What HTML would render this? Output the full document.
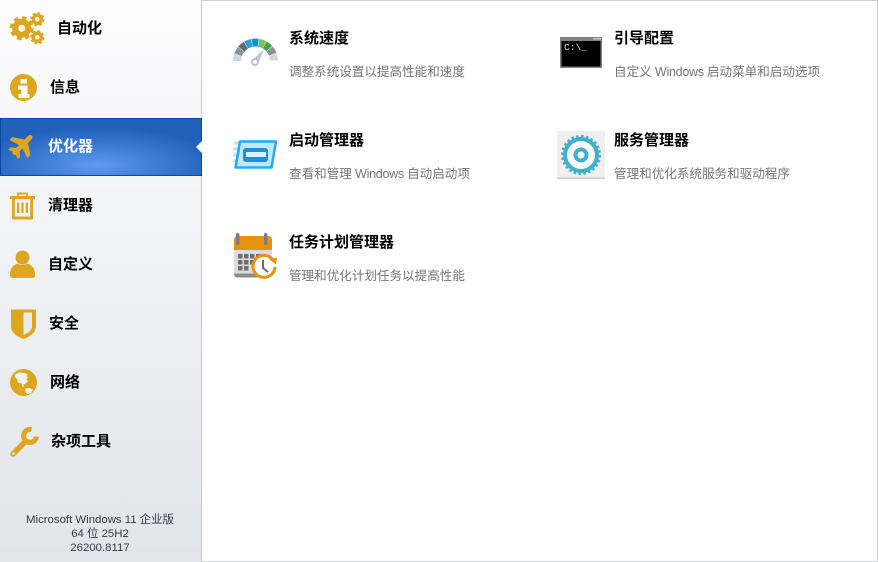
<!DOCTYPE html>
<html><head><meta charset="utf-8">
<style>
html,body{margin:0;padding:0;width:878px;height:562px;overflow:hidden;background:#fff;font-family:"Liberation Sans","Noto Sans CJK SC",sans-serif}
#side{position:absolute;left:0;top:0;width:201px;height:562px;background:linear-gradient(#fdfdfe,#e1e4e9)}
#main{position:absolute;left:201px;top:0;width:677px;height:562px;box-sizing:border-box;background:#fff;border:1px solid #cfd0d2;border-left:1px solid #c6c8cb}
#act{position:absolute;left:0;top:118px;width:202px;height:58px;box-sizing:border-box;border:1px solid #0e479b;background:radial-gradient(ellipse 125px 38px at 96px 46px,#5e9cee 0%,#3c7bd5 50%,#2160ba 100%)}
.n{position:absolute;font-size:15px;font-weight:bold;color:#000;line-height:20px;white-space:nowrap;font-family:"Noto Sans CJK SC",sans-serif}
.t{position:absolute;font-size:15px;font-weight:bold;color:#000;line-height:20px;white-space:nowrap;font-family:"Noto Sans CJK SC",sans-serif}
.d{position:absolute;font-size:12.57px;color:#757575;line-height:18px;white-space:nowrap;font-family:"Liberation Sans","Noto Sans CJK SC",sans-serif}
.d span{letter-spacing:-.3px}
svg{position:absolute;overflow:visible}
#ver{position:absolute;left:0;top:513px;width:200px;text-align:center;font-size:11.4px;line-height:14px;color:#333a48;font-family:"Liberation Sans","Noto Sans CJK SC",sans-serif}
</style></head><body>
<div id="side"></div>
<div id="main"></div>
<div id="act"></div>
<svg style="left:196px;top:141px" width="6" height="12"><path d="M6 0V12L0 6Z" fill="#fff"/></svg>

<svg style="left:10px;top:13px" width="36" height="34" viewBox="0 0 36 34">
<g fill="none" stroke="#dea61f">
<circle cx="11.7" cy="15.3" r="6.5" stroke-width="6"/>
<circle cx="11.7" cy="15.3" r="10.5" stroke-width="3" stroke-dasharray="4.5 3.75"/>
<circle cx="27.3" cy="6.3" r="4" stroke-width="3.5"/>
<circle cx="27.3" cy="6.3" r="6.2" stroke-width="2" stroke-dasharray="2.6 2.27"/>
<circle cx="27.3" cy="24.3" r="4" stroke-width="3.5"/>
<circle cx="27.3" cy="24.3" r="6.2" stroke-width="2" stroke-dasharray="2.6 2.27"/>
</g></svg>
<div class="n" style="left:57px;top:18px">自动化</div>

<svg style="left:10px;top:74px" width="28" height="28" viewBox="0 0 28 28"><circle cx="13.5" cy="13.5" r="13.5" fill="#dea61f"/><path d="M10.500 5h6.500v4.500h-6.500zM8 11.500h9.500v8.500H19.500v4H8.500v-4H11v-4.500H8z" fill="#fdfdfd"/></svg>
<div class="n" style="left:50px;top:77px">信息</div>

<svg style="left:10px;top:132px" width="26" height="26" viewBox="0 0 26 26">
<g transform="translate(12.500 13) scale(.8) rotate(45) translate(-13 -13)" fill="#dea61f">
<rect x="10" y="-3.500" width="6" height="33" rx="3"/>
<path d="M10.500 6L-3 15V20L10.500 16ZM15.500 6L29 15V20L15.500 16Z"/>
<path d="M10.500 21L4.500 25.500V29.500L10.500 27.500ZM15.500 21L21.500 25.500V29.500L15.500 27.500Z"/>
</g></svg>
<div class="n" style="left:48px;top:136px;color:#fff">优化器</div>

<svg style="left:10px;top:192px" width="26" height="28" viewBox="0 0 26 28"><g fill="#dea61f"><path d="M0 4h25v3H0z"/><path d="M7 5V0.500h11V5h-2V2.500H9V5z"/><path d="M2 7h2.800v17.500h15.400V7H23v19.500a1 1 0 0 1-1 1H3a1 1 0 0 1-1-1z"/><path d="M7 10.500h2.200V21H7zM11.400 10.500h2.200V21h-2.200zM15.800 10.500H18V21h-2.200z"/></g></svg>
<div class="n" style="left:48px;top:195px">清理器</div>

<svg style="left:10px;top:250px" width="26" height="29" viewBox="0 0 26 29"><g fill="#dea61f"><circle cx="12.500" cy="7.500" r="7"/><path d="M0 25C0 18 3 15 8 13.500C10 15.500 15 15.500 17 13.500C22 15 25 18 25 25C25 27 24 28 22 28H3C1 28 0 27 0 25Z"/></g></svg>
<div class="n" style="left:48px;top:254px">自定义</div>

<svg style="left:11px;top:309px" width="25" height="30" viewBox="0 0 25 30"><path d="M0 .5h25v17c0 6-6.500 10.500-12.500 12.500C6.500 28 0 23.500 0 17.500Z" fill="#dea61f"/><path d="M12.500 3.500h8.500v14c0 3.500-3.500 6.500-8.500 8.500Z" fill="#e9ebef"/></svg>
<div class="n" style="left:49px;top:313px">安全</div>

<svg style="left:10px;top:369px" width="28" height="28" viewBox="0 0 28 28"><circle cx="13.500" cy="13.500" r="13.500" fill="#dea61f"/><path d="M5 5.500L9 3.500L14 4L18 5.500L16 7L18 8L16.500 10.500L18 12.500L15 15L13.500 15.500L14 18L12.500 17.500L11.500 14.500L8 13.500L7 10L5 8.500ZM15 19.500L20 19L23 20.500L21 24L17 25L15.500 22.500Z" fill="#f2f2f0"/></svg>
<div class="n" style="left:50px;top:372px">网络</div>

<svg style="left:10px;top:427px" width="30" height="30" viewBox="0 0 30 30">
<path d="M3 27L16 14" stroke="#dea61f" stroke-width="5.500" stroke-linecap="round" fill="none"/>
<path d="M21.500 2.600A6.500 6.500 0 1 0 26.500 9.500" fill="none" stroke="#dea61f" stroke-width="5"/>
<circle cx="3.500" cy="26.500" r="1.300" fill="#e6e8ec"/></svg>
<div class="n" style="left:51px;top:431px">杂项工具</div>

<div id="ver">Microsoft Windows 11 企业版<br>64 位 25H2<br>26200.8117</div>

<!-- speed -->
<svg style="left:233px;top:38px" width="46" height="30" viewBox="0 0 46 30">
<g fill="none" stroke-width="8">
<circle cx="22.500" cy="23" r="18.500" pathLength="360" stroke-dasharray="17 343" transform="rotate(181.500 22.500 23)" stroke="#d0d6da"/>
<circle cx="22.500" cy="23" r="18.500" pathLength="360" stroke-dasharray="17 343" transform="rotate(201.500 22.500 23)" stroke="#87929a"/>
<circle cx="22.500" cy="23" r="18.500" pathLength="360" stroke-dasharray="17 343" transform="rotate(221.500 22.500 23)" stroke="#5f6b75"/>
<circle cx="22.500" cy="23" r="18.500" pathLength="360" stroke-dasharray="17 343" transform="rotate(241.500 22.500 23)" stroke="#2e9fd4"/>
<circle cx="22.500" cy="23" r="18.500" pathLength="360" stroke-dasharray="17 343" transform="rotate(261.500 22.500 23)" stroke="#1a8ed0"/>
<circle cx="22.500" cy="23" r="18.500" pathLength="360" stroke-dasharray="17 343" transform="rotate(281.500 22.500 23)" stroke="#7cbf5e"/>
<circle cx="22.500" cy="23" r="18.500" pathLength="360" stroke-dasharray="17 343" transform="rotate(301.500 22.500 23)" stroke="#4ba04f"/>
<circle cx="22.500" cy="23" r="18.500" pathLength="360" stroke-dasharray="17 343" transform="rotate(321.500 22.500 23)" stroke="#87929a"/>
<circle cx="22.500" cy="23" r="18.500" pathLength="360" stroke-dasharray="17 343" transform="rotate(341.500 22.500 23)" stroke="#d0d6da"/>
</g>
<path d="M31 11L25 26L19.500 22Z" fill="#bcc5ca"/>
<circle cx="22" cy="24" r="3" fill="#fff" stroke="#bcc5ca" stroke-width="2"/>
</svg>
<div class="t" style="left:289px;top:28px">系统速度</div>
<div class="d" style="left:289px;top:63px">调整系统设置以提高性能和速度</div>

<!-- console -->
<svg style="left:560px;top:37px" width="42" height="31" viewBox="0 0 42 31"><rect width="42" height="31" fill="#7e8285"/><rect x="1.500" y="4" width="39" height="25.500" fill="#000"/><rect x="33" y="1" width="8" height="1.500" fill="#c5c8ca"/><text x="4" y="13" font-family="Liberation Mono,monospace" font-size="9.6" fill="#e6e6e6">C:\_</text></svg>
<div class="t" style="left:614px;top:28px">引导配置</div>
<div class="d" style="left:614px;top:63px">自定义<span> Windows </span>启动菜单和启动选项</div>

<!-- startup -->
<svg style="left:233px;top:140px" width="45" height="30" viewBox="0 0 45 30">
<path d="M1 3h8M0 9h6M0 15h5M0 21h5" stroke="#b8e6fa" stroke-width="3" fill="none"/>
<path d="M7 1.500H43L38.500 27.500H2.500Z" fill="#bfe9fb" stroke="#2ba7ea" stroke-width="2.500" stroke-linejoin="round"/>
<rect x="10" y="8" width="25" height="14" rx="3" fill="#1e8fdc"/>
<rect x="13" y="12" width="20" height="5" fill="#dff3fc"/>
</svg>
<div class="t" style="left:289px;top:130px">启动管理器</div>
<div class="d" style="left:289px;top:165px">查看和管理<span> Windows </span>自动启动项</div>

<!-- service -->
<svg style="left:557px;top:131px" width="48" height="48" viewBox="0 0 48 48">
<rect width="48" height="48" fill="#efefef"/><rect y="46.500" width="48" height="1.500" fill="#cfcfcf"/>
<circle cx="24" cy="24" r="14" fill="#fbfbfb"/>
<circle cx="24" cy="24" r="16" fill="none" stroke="#3fb0cd" stroke-width="4"/>
<circle cx="24" cy="24" r="18.800" fill="none" stroke="#3fb0cd" stroke-width="2.500" stroke-dasharray="2.500 2.420"/>
<circle cx="24" cy="24" r="5.500" fill="none" stroke="#3fb0cd" stroke-width="4"/>
</svg>
<div class="t" style="left:614px;top:130px">服务管理器</div>
<div class="d" style="left:614px;top:165px">管理和优化系统服务和驱动程序</div>

<!-- scheduler -->
<svg style="left:233px;top:233px" width="46" height="48" viewBox="0 0 46 48">
<rect x="1" y="3" width="38" height="41.500" rx="3.500" fill="#dcdcdc"/>
<path d="M1 40.500h38v.5a3.500 3.500 0 0 1-3.500 3.500h-31A3.500 3.500 0 0 1 1 41z" fill="#8c8c8c"/>
<path d="M1 17V6.500A3.500 3.500 0 0 1 4.500 3h31A3.500 3.500 0 0 1 39 6.500V17Z" fill="#e8920c"/>
<rect x="3" y="0" width="3.500" height="12" rx="1.700" fill="#7d7d7d"/><rect x="31" y="0" width="3.500" height="12" rx="1.700" fill="#7d7d7d"/>
<g fill="#6f6f6f"><rect x="5" y="21" width="4.500" height="4.500"/><rect x="11" y="21" width="4.500" height="4.500"/><rect x="17" y="21" width="4.500" height="4.500"/><rect x="23" y="21" width="4.500" height="4.500"/><rect x="5" y="27" width="4.500" height="4.500"/><rect x="11" y="27" width="4.500" height="4.500"/><rect x="17" y="27" width="4.500" height="4.500"/><rect x="5" y="33" width="4.500" height="4.500"/><rect x="11" y="33" width="4.500" height="4.500"/></g>
<circle cx="31" cy="34" r="12" fill="#fff"/>
<path d="M40 27A11 11 0 1 0 42 34" fill="none" stroke="#e8920c" stroke-width="3"/>
<path d="M36 26l8-1.500-1 7Z" fill="#e8920c"/>
<path d="M30 27v8l5 4" fill="none" stroke="#6b6b6b" stroke-width="2"/>
</svg>
<div class="t" style="left:289px;top:232px">任务计划管理器</div>
<div class="d" style="left:289px;top:267px">管理和优化计划任务以提高性能</div>
</body></html>
